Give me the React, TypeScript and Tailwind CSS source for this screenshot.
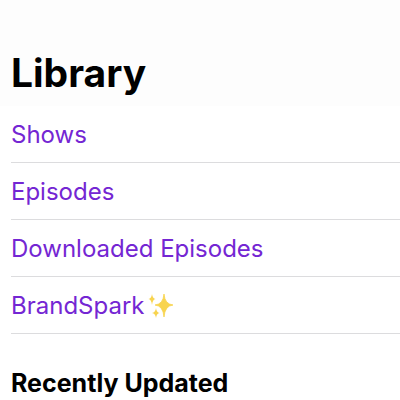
const links = ["Shows", "Episodes", "Downloaded Episodes", "BrandSpark"];

function Sparkles() {
  return (
    <svg viewBox="0 0 28 28" className="ml-0.5 h-7 w-7" fill="#f8d44f" aria-hidden="true">
      <path d="M18 2 Q18.800 12.200 27 13 Q18.800 13.800 18 25 Q17.200 13.800 9 13 Q17.200 12.200 18 2Z" stroke="#f8d44f" strokeWidth="0.8" strokeLinejoin="round" />
      <path d="M6 2 Q6.600 6.400 9.500 7 Q6.600 7.600 6 13 Q5.400 7.600 2.500 7 Q5.400 6.400 6 2Z" />
      <path d="M10 16 Q10.600 20.400 13.500 21 Q10.600 21.600 10 26 Q9.400 21.600 6 21 Q9.400 20.400 10 16Z" />
    </svg>
  );
}

export default function App() {
  return (
    <main className="min-h-screen w-full bg-white font-['Inter','Liberation_Sans',sans-serif] text-black">
      <header className="bg-[#fdfdfd] px-[11px] pt-12 pb-2">
        <h1 className="text-[39px] leading-[50px] font-bold">Library</h1>
      </header>
      <nav className="pl-[11px]">
        <ul>
          {links.map((name) => (
            <li key={name} className="border-b border-[#dcdcde]">
              <a href="#" className="flex h-14 items-center pt-0.5 text-2xl leading-8 text-[#7426d3]">
                {name}
                {name === "BrandSpark" && <Sparkles />}
              </a>
            </li>
          ))}
        </ul>
      </nav>
      <section className="px-[11px] pt-8">
        <h2 className="text-[25px] leading-[34px] font-bold">Recently Updated</h2>
      </section>
    </main>
  );
}
